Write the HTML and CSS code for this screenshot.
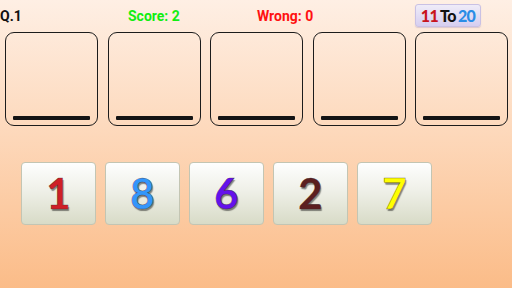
FILE: index.html
```html
<!DOCTYPE html>
<html>
<head>
<meta charset="utf-8">
<link rel="stylesheet" href="styles.css">
</head>
<body>
<div class="screen">
  <header class="topbar">
    <div class="q">Q.1</div>
    <div class="score">Score: 2</div>
    <div class="wrong">Wrong: 0</div>
    <div class="range"><span class="r-from">11</span> <span class="r-to">To</span> <span class="r-end">20</span></div>
  </header>
  <section class="slots">
    <div class="slot"><div class="line"></div></div>
    <div class="slot"><div class="line"></div></div>
    <div class="slot"><div class="line"></div></div>
    <div class="slot"><div class="line"></div></div>
    <div class="slot"><div class="line"></div></div>
  </section>
  <section class="tiles">
    <div class="tile"><span class="digit d-red">1</span></div>
    <div class="tile"><span class="digit d-blue">8</span></div>
    <div class="tile"><span class="digit d-purple">6</span></div>
    <div class="tile"><span class="digit d-maroon">2</span></div>
    <div class="tile"><span class="digit d-yellow">7</span></div>
  </section>
</div>
</body>
</html>
```
FILE: styles.css
```css
html, body {
  margin: 0;
  padding: 0;
}
body {
  width: 512px;
  height: 288px;
  overflow: hidden;
  background: linear-gradient(180deg, #feefe4 0%, #fdd9bc 45%, #fbbc88 100%);
  font-family: Roboto, "Liberation Sans", sans-serif;
}
.screen {
  width: 512px;
  height: 288px;
}
.topbar {
  display: grid;
  grid-template-columns: 128px 129px 158px 66px;
  align-items: center;
  height: 32px;
  font-weight: bold;
  font-size: 14px;
}
.q { color: #111; }
.score { color: #11ee11; }
.wrong { color: #ff1111; }
.range {
  height: 23px;
  box-sizing: border-box;
  border: 1px solid #c9c1e4;
  border-radius: 3px;
  background: linear-gradient(180deg, #efecf8 0%, #d6cef0 100%);
  box-shadow: 0 1px 1px rgba(120, 100, 160, 0.25);
  font-family: Lato, "Open Sans", sans-serif;
  font-size: 16px;
  font-weight: 900;
  letter-spacing: -0.6px;
  word-spacing: -2px;
  display: flex;
  align-items: center;
  justify-content: center;
  gap: 2px;
  margin-top: -1px;
}
.r-from { color: #c8141e; }
.r-to { color: #111; }
.r-end { color: #2a8de6; }
.slots {
  display: flex;
  gap: 9.5px;
  padding-left: 5px;
}
.slot {
  width: 93px;
  height: 94px;
  box-sizing: border-box;
  border: 1.5px solid #1c1c1c;
  border-radius: 9px;
  display: flex;
  flex-direction: column;
  justify-content: flex-end;
  padding: 0 7px 5px;
}
.line {
  height: 4px;
  background: #141414;
  border-radius: 1px;
}
.tiles {
  display: flex;
  gap: 9px;
  padding-left: 21px;
  margin-top: 36px;
}
.tile {
  width: 75px;
  height: 63px;
  box-sizing: border-box;
  border: 1px solid #c3c5b3;
  border-radius: 4px;
  background: linear-gradient(180deg, #fefefe 0%, #eff0e8 45%, #d8dbc7 100%);
  display: flex;
  align-items: center;
  justify-content: center;
}
.digit {
  font-family: Lato, "Open Sans", sans-serif;
  font-weight: 700;
  font-size: 42px;
  line-height: 1;
  -webkit-text-stroke: 0.5px rgba(60, 40, 40, 0.7);
  text-shadow: 1px 2px 1px rgba(0, 0, 0, 0.45);
  margin-top: -1px;
}
.d-red { color: #cf1f27; }
.d-blue { color: #3396fb; }
.d-purple { color: #6412ec; }
.d-maroon { color: #5c1f1f; }
.d-yellow { color: #ffff00; }
```
